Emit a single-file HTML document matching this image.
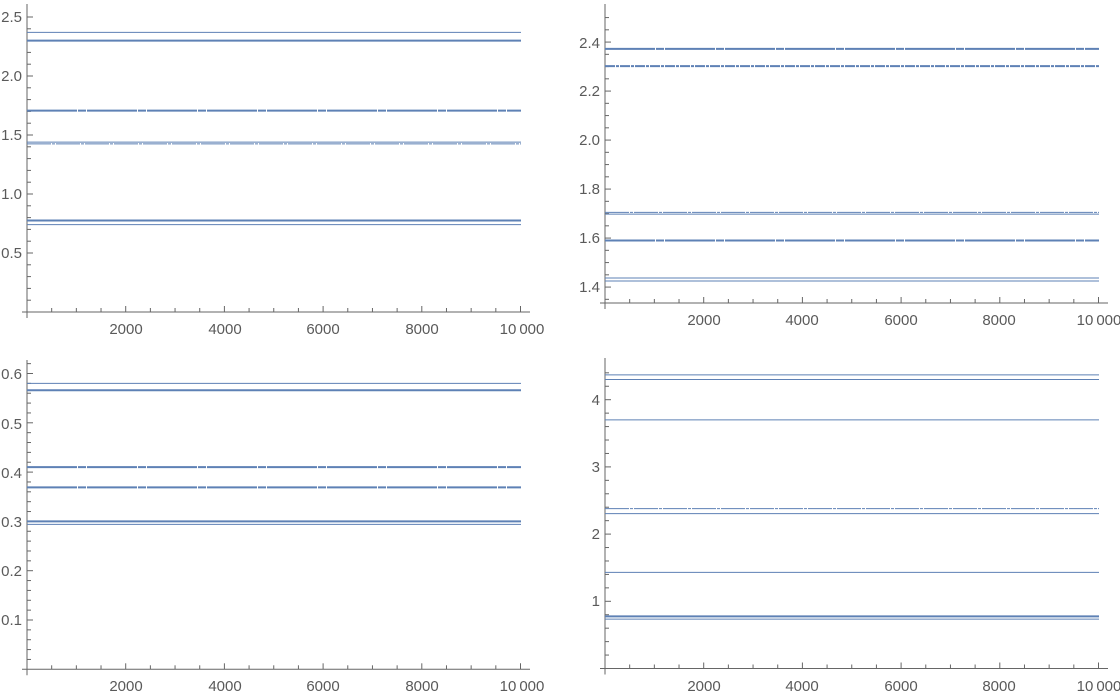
<!DOCTYPE html>
<html><head><meta charset="utf-8"><style>
body{margin:0;background:#fff;width:1120px;height:692px;overflow:hidden}
svg{position:absolute;left:0;top:0}
text{font-family:"Liberation Sans",sans-serif;font-size:15px;fill:#5a5a5a}
</style></head><body>
<svg id="s" width="1120" height="692" viewBox="0 0 1120 692">
<g id="g"></g>
<g text-anchor="end">
<text x="22" y="22">2.5</text><text x="22" y="81">2.0</text><text x="22" y="140">1.5</text><text x="22" y="199">1.0</text><text x="22" y="258">0.5</text>
<text x="600" y="48">2.4</text><text x="600" y="96">2.2</text><text x="600" y="145">2.0</text><text x="600" y="194">1.8</text><text x="600" y="243">1.6</text><text x="600" y="292">1.4</text>
<text x="22" y="379">0.6</text><text x="22" y="429">0.5</text><text x="22" y="478">0.4</text><text x="22" y="527">0.3</text><text x="22" y="576">0.2</text><text x="22" y="625">0.1</text>
<text x="600" y="405">4</text><text x="600" y="539">2</text><text x="600" y="472">3</text><text x="600" y="606">1</text>
</g>
<g text-anchor="middle">
<text x="126" y="334">2000</text><text x="225" y="334">4000</text><text x="323" y="334">6000</text><text x="422" y="334">8000</text><text x="522" y="334">10&#8201;000</text>
<text x="704" y="325">2000</text><text x="802" y="325">4000</text><text x="901" y="325">6000</text><text x="999" y="325">8000</text><text x="1099" y="325">10&#8201;000</text>
<text x="126" y="691">2000</text><text x="225" y="691">4000</text><text x="323" y="691">6000</text><text x="422" y="691">8000</text><text x="522" y="691">10&#8201;000</text>
<text x="704" y="691">2000</text><text x="802" y="691">4000</text><text x="901" y="691">6000</text><text x="999" y="691">8000</text><text x="1099" y="691">10&#8201;000</text>
</g>
</svg>
<script>
var g=document.getElementById('g'),h='';
function L(x1,y1,x2,y2,c,w,d){h+='<line x1="'+x1+'" y1="'+y1+'" x2="'+x2+'" y2="'+y2+'" stroke="'+c+'" stroke-width="'+w+'"'+(d?' stroke-dasharray="'+d+'"':'')+'/>';}
function P(ox,ay,top,v0,s,minor,majEvery,lines){
 var ax='#666';
 L(ox,top,ox,ay+6,ax,1);L(ox-5,ay,ox+503,ay,ax,1);
 var dx=98.7/4;
 for(var i=1;i<=20;i++){var x=ox+i*dx;L(x,ay,x,ay-(i%4==0?6:4),ax,1);}
 for(var k=1;k<400;k++){var val=Math.ceil(v0/minor-1e-9)*minor+k*minor-minor;var y=ay-(val-v0)*s;if(y<top+2)break;if(y>ay-1)continue;var mj=Math.abs(val/majEvery-Math.round(val/majEvery))<1e-6;L(ox,y,ox+(mj?6:4),y,ax,1);}
 lines.forEach(function(l){var y=ay-(l[0]-v0)*s;L(ox,y,ox+494,y,'#5E81B5',l[1],l[2]);});
}
P(27,312,4,0,118,0.1,0.5,[[2.37,1],[2.30,2],[1.707,2,'50 1 8 1'],[1.44,1],[1.425,1,'24 1 3 1'],[0.775,2],[0.74,1]]);
P(605,303,4,1.335,245,0.05,0.2,[[2.372,2,'50 1 8 1'],[2.302,2,'10 1 3 1'],[1.705,1,'24 1 3 1'],[1.698,1],[1.59,2,'50 1 8 1'],[1.437,1],[1.425,1]]);
P(27,669.3,360,0,493,0.02,0.1,[[0.58,1],[0.566,2],[0.41,2,'50 1 8 1'],[0.369,2,'50 1 8 1'],[0.3,2],[0.294,1]]);
P(605,668.5,358,0,67.2,0.2,1,[[4.37,1],[4.30,1],[3.70,1],[2.38,1,'24 1 3 1'],[2.305,1],[1.43,1],[0.775,2],[0.735,1]]);
g.innerHTML=h;
</script>
</body></html>
